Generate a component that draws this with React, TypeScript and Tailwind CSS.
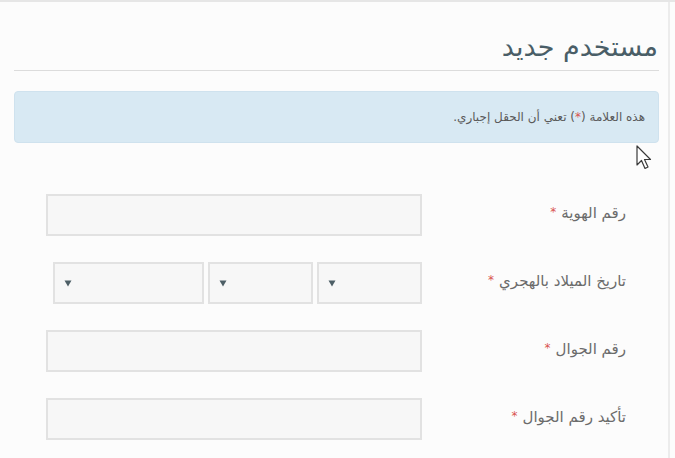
import React from "react";

const font = { fontFamily: '"DejaVu Sans", "Noto Sans", sans-serif' };

function Label({ text }: { text: string }) {
  return (
    <div className="w-[204px] shrink-0 flex items-center justify-start text-[15px] text-[#6b6b6b] -mt-[3px]">
      <span>{text}</span>
      <span className="text-[#d9534f] text-[12px] mr-[5px] -mt-[4px]">*</span>
    </div>
  );
}

function Arrow() {
  return (
    <svg width="8" height="7" viewBox="0 0 8 7" className="shrink-0">
      <path d="M0.5 0.5 L7.5 0.5 L4 6.5 Z" fill="#4d5f66" />
    </svg>
  );
}

function Select({ w }: { w: string }) {
  return (
    <div className={`${w} h-[42px] border-2 border-[#e2e2e2] bg-[#f7f7f7] flex items-center justify-end pl-[9px]`}>
      <Arrow />
    </div>
  );
}

function Input() {
  return <div className="w-[376px] h-[42px] border-2 border-[#e2e2e2] bg-[#f7f7f7]" />;
}

export default function App() {
  return (
    <div className="w-[675px] h-[458px] bg-[#fcfcfc] border-t-2 border-[#e6e6e6] relative overflow-hidden" style={font}>
      <div dir="rtl" className="w-[670px] h-full border-r-2 border-[#ececec] pr-[9px] pl-[14px]">
        <div className="h-[68px] flex items-end pb-[10px]">
          <h1 className="text-[27px] leading-none text-[#4a5e67] pr-[1px]">مستخدم جديد</h1>
        </div>
        <div className="h-px bg-[#dcdcdc]" />
        <div className="mt-[20px] h-[52px] rounded-[4px] bg-[#d8e9f3] border border-[#cfe2ee] flex items-center pr-[13px] text-[12px] text-[#5a5a5a]">
          هذه العلامة (<span className="text-[#d9534f]">*</span>) تعني أن الحقل إجباري.
        </div>
        <div className="mt-[51px] flex flex-col gap-[26px] pr-[33px]">
          <div className="flex h-[42px]">
            <Label text="رقم الهوية" />
            <Input />
          </div>
          <div className="flex h-[42px]">
            <Label text="تاريخ الميلاد بالهجري" />
            <div className="flex gap-[4px]">
              <Select w="w-[105px]" />
              <Select w="w-[105px]" />
              <Select w="w-[151px]" />
            </div>
          </div>
          <div className="flex h-[42px]">
            <Label text="رقم الجوال" />
            <Input />
          </div>
          <div className="flex h-[42px]">
            <Label text="تأكيد رقم الجوال" />
            <Input />
          </div>
        </div>
      </div>
      <svg className="absolute left-[636px] top-[143px]" width="16" height="26" viewBox="0 0 16 26">
        <path d="M1 1 L1 20 L5.5 15.5 L9 23.5 L12 22 L8.5 14.5 L14.5 14.5 Z" fill="#ffffff" stroke="#3a3a3a" strokeWidth="1.2" strokeLinejoin="round" />
      </svg>
    </div>
  );
}
